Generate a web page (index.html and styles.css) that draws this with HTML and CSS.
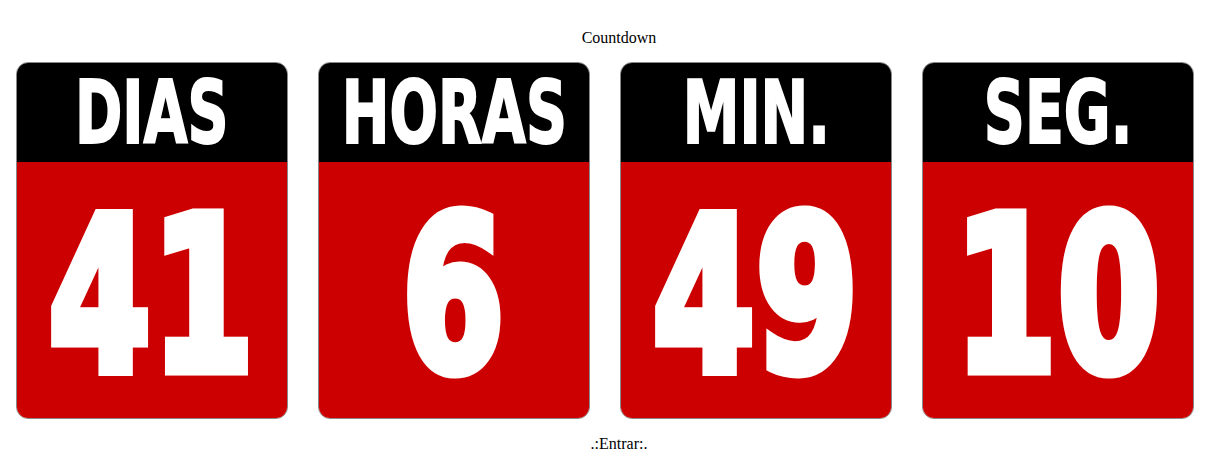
FILE: index.html
```html
<!DOCTYPE html>
<html>
<head>
<meta charset="utf-8">
<link rel="stylesheet" href="styles.css">
</head>
<body>
<div class="title">Countdown</div>
<div class="cards">
  <div class="card"><div class="head"><span class="lbl">DIAS</span></div><div class="body"><span class="num">41</span></div></div>
  <div class="card"><div class="head"><span class="lbl">HORAS</span></div><div class="body"><span class="num">6</span></div></div>
  <div class="card"><div class="head"><span class="lbl">MIN.</span></div><div class="body"><span class="num">49</span></div></div>
  <div class="card"><div class="head"><span class="lbl">SEG.</span></div><div class="body"><span class="num">10</span></div></div>
</div>
<div class="foot">.:Entrar:.</div>
</body>
</html>
```
FILE: styles.css
```css
html, body { margin: 0; padding: 0; background: #fff; }
body { font-family: "Liberation Serif", Tinos, "Times New Roman", "DejaVu Serif", serif; font-size: 16px; color: #000; }
.title { text-align: center; padding: 29px 0 0 17px; line-height: 18px; height: 33px; }
.cards { display: flex; gap: 30px; padding-left: 16px; }
.card { width: 270px; border: 1px solid #888; border-radius: 12px; overflow: hidden; display: flex; flex-direction: column; }
.head { background: #000; height: 99px; display: flex; align-items: center; justify-content: center; overflow: hidden; }
.body { background: #cc0000; height: 256px; display: flex; align-items: center; justify-content: center; overflow: hidden; }
.lbl, .num { display: inline-block; font-family: "DejaVu Sans Condensed", "DejaVu Sans", sans-serif; font-weight: bold; color: #fff; line-height: 1; white-space: nowrap; flex: none; }
.lbl { font-size: 88px; transform: scale(0.72, 1); -webkit-text-stroke: 2px #fff; }
.num { font-size: 214px; transform: translateY(6px) scale(0.76, 1); -webkit-text-stroke: 11px #fff; letter-spacing: 2px; }
.foot { text-align: center; padding: 16px 0 0 17px; line-height: 18px; }
```
